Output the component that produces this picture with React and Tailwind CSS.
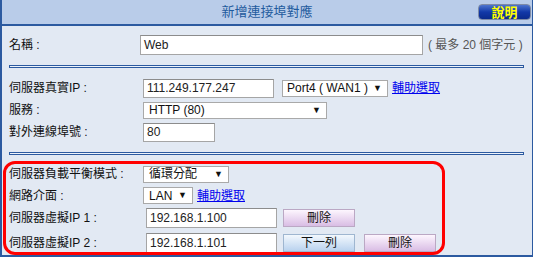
import React from 'react'

const font = { fontFamily: '"Liberation Sans", "Noto Sans CJK TC", sans-serif' }

function Label({ w, children }) {
  return <div className={`${w} shrink-0 text-[12px] text-[#111]`}>{children}</div>
}

function TextBox({ w, value, h = 'h-[20px]' }) {
  return (
    <div className={`${w} ${h} flex items-center border border-[#a5a5a5] border-t-[#8c8c8c] bg-white pl-[3px] text-[12px] text-[#222]`}>
      {value}
    </div>
  )
}

function Select({ w, value, pl = 'pl-[5px]' }) {
  return (
    <div className={`${w} flex h-[17px] items-center justify-between border border-[#a9a9a9] bg-white ${pl} pr-[5px] text-[12px] text-[#111]`}>
      <span>{value}</span>
      <span className="text-[9px] leading-none">▼</span>
    </div>
  )
}

function Link({ children }) {
  return <a className="ml-[4px] cursor-pointer text-[12px] text-[#0000ee] underline">{children}</a>
}

function Sep() {
  return <div className="h-[3px] w-[515px] border border-[#2c5aa0] bg-[#eef3fa]" />
}

function Btn({ children, tone }) {
  const c =
    tone === 'blue'
      ? 'border-[#9fb6d0] bg-gradient-to-b from-[#f3f8fd] to-[#b9d2ee]'
      : 'border-[#bba8c4] bg-gradient-to-b from-[#fdf6fe] to-[#d9bde4]'
  return (
    <div className={`flex h-[18px] w-[72px] items-center justify-center border ${c} text-[12px] text-[#111]`}>
      {children}
    </div>
  )
}

export default function App() {
  return (
    <div className="relative h-[257px] w-[533px] overflow-hidden border-b-2 border-l-2 border-r border-[#2c5aa0] bg-[#e2e9f3]" style={font}>
      {/* header */}
      <div className="grid h-[26px] grid-cols-[1fr_auto_1fr] items-center border-b-2 border-[#2c5aa0] bg-[#b9cce9]">
        <div />
        <div className="text-[13px] text-[#1f5b9e]">新增連接埠對應</div>
        <div className="flex justify-end pr-[1px]">
          <div className="flex h-[16px] w-[53px] items-center justify-center rounded-[4px] border border-[#7d8aa6] bg-gradient-to-b from-[#4d74cf] via-[#1238a8] to-[#0a2a8c] text-[13px] font-bold leading-none text-[#ffff00]">
            說明
          </div>
        </div>
      </div>

      <div className="pl-[7px]">
        {/* name */}
        <div className="mt-[8px] flex h-[22px] items-center">
          <Label w="w-[131px]">名稱 :</Label>
          <TextBox w="w-[283px]" value="Web" />
          <span className="ml-[5px] text-[12px] text-[#555]">( 最多 20 個字元 )</span>
        </div>

        <div className="mt-[9px]">
          <Sep />
        </div>

        <div className="mt-[9px]">
          <div className="flex h-[22px] items-center">
            <Label w="w-[134px]">伺服器真實IP :</Label>
            <TextBox w="w-[131px]" h="h-[19px]" value="111.249.177.247" />
            <div className="ml-[8px]">
              <Select w="w-[106px]" value="Port4 ( WAN1 )" pl="pl-[4px]" />
            </div>
            <Link>輔助選取</Link>
          </div>
          <div className="flex h-[22px] items-center">
            <Label w="w-[134px]">服務 :</Label>
            <Select w="w-[184px]" value="HTTP (80)" />
          </div>
          <div className="flex h-[22px] items-center">
            <Label w="w-[134px]">對外連線埠號 :</Label>
            <TextBox w="w-[72px]" h="h-[19px]" value="80" />
          </div>
        </div>

        <div className="mt-[9px]">
          <Sep />
        </div>

        <div className="mt-[8px]">
          <div className="flex h-[22px] items-center">
            <Label w="w-[134px]">伺服器負載平衡模式 :</Label>
            <Select w="w-[86px]" value="循環分配" />
          </div>
          <div className="flex h-[21px] items-center">
            <Label w="w-[134px]">網路介面 :</Label>
            <Select w="w-[50px]" value="LAN" />
            <Link>輔助選取</Link>
          </div>
          <div className="flex h-[24px] items-center">
            <Label w="w-[137px]">伺服器虛擬IP 1 :</Label>
            <TextBox w="w-[131px]" value="192.168.1.100" />
            <div className="ml-[6px]">
              <Btn>刪除</Btn>
            </div>
          </div>
          <div className="flex h-[25px] items-center">
            <Label w="w-[137px]">伺服器虛擬IP 2 :</Label>
            <TextBox w="w-[131px]" value="192.168.1.101" />
            <div className="ml-[6px] flex gap-[9px]">
              <Btn tone="blue">下一列</Btn>
              <Btn>刪除</Btn>
            </div>
          </div>
        </div>
      </div>

      {/* red annotation */}
      <div className="pointer-events-none absolute left-[1px] top-[161px] h-[94px] w-[442px] rounded-[12px] border-[3px] border-[#ff0000]" />
    </div>
  )
}
